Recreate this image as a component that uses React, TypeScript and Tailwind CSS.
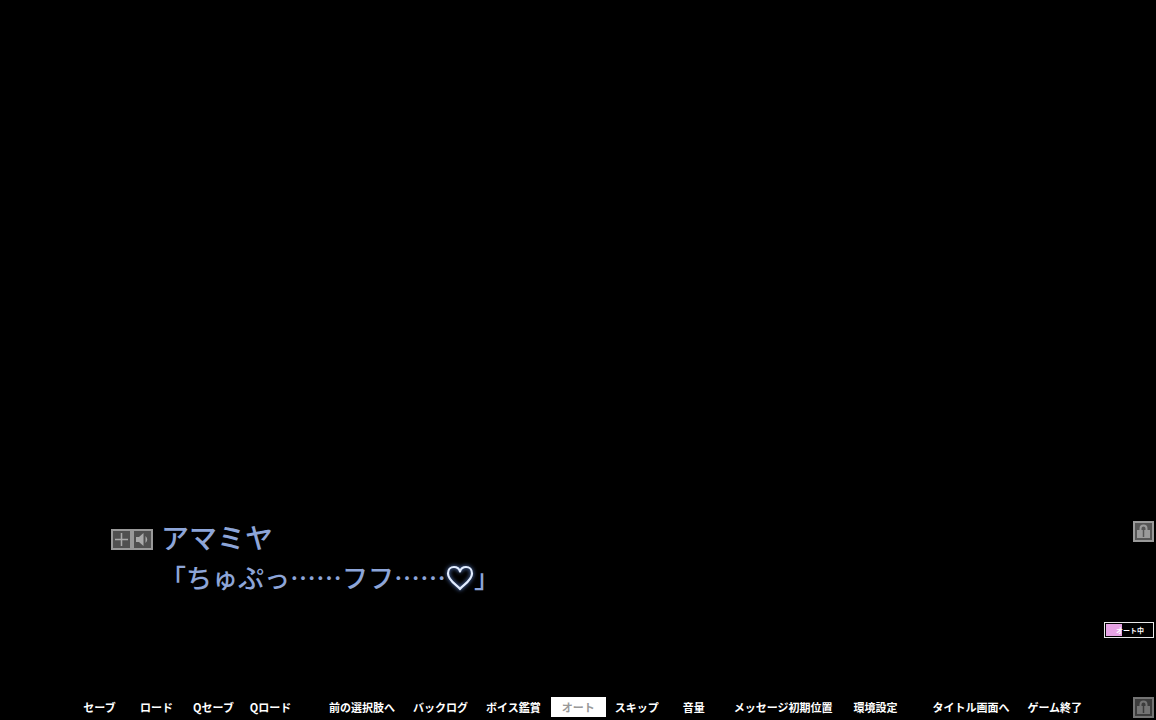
import { useState } from 'react';

const FONT = 'font-["Noto_Sans_CJK_JP",sans-serif]';

const groups = [
  { className: '', button: 'w-[57px]', items: ['セーブ', 'ロード', 'Qセーブ', 'Qロード'] },
  { className: 'ml-[21px]', button: 'px-[9px]', items: ['前の選択肢へ', 'バックログ', 'ボイス鑑賞'] },
  { className: 'ml-px', button: 'px-[11px]', items: ['オート'] },
  { className: '', button: 'px-[9px]', items: ['スキップ'] },
  { className: '', button: 'w-[52px]', items: ['音量'] },
  { className: 'ml-[5px] gap-[3px]', button: 'px-[9px]', items: ['メッセージ初期位置', '環境設定'] },
  { className: 'ml-[17px]', button: 'px-[9px]', items: ['タイトル画面へ', 'ゲーム終了'] },
];

function LockButton({ label, dim }: { label: string; dim?: boolean }) {
  return (
    <button type="button" aria-label={label} className={dim ? 'text-[#747474]' : 'text-[#9a9a9a]'}>
      <svg viewBox="0 0 21 21" className="block h-[21px] w-[21px]">
        <rect x="1" y="1" width="19" height="19" fill={dim ? '#3c3c3c' : '#565656'} stroke="currentColor" strokeWidth="2" />
        <path d="M7.5 10V7.500a3 3 0 0 1 6 0v2.500" fill="none" stroke="currentColor" strokeWidth="2" />
        <rect x="4" y="9" width="13" height="8" fill="currentColor" />
        <path d="M10.5 8v8" stroke={dim ? '#3c3c3c' : '#565656'} strokeWidth="1.5" />
      </svg>
    </button>
  );
}

export default function App() {
  const [active, setActive] = useState('オート');

  return (
    <div className={`${FONT} flex min-h-screen flex-col justify-end bg-black text-white`}>
      <main className="flex justify-between pb-[59px] pr-[2px] pl-[111px]">
        <div className="text-[#8da5d8]">
          <div className="flex h-10 items-center">
            <button type="button" aria-label="お気に入りに追加">
              <svg viewBox="0 0 21 21" className="block h-[21px] w-[21px]">
                <rect x="1" y="1" width="19" height="19" fill="#505050" stroke="#999" strokeWidth="2" />
                <path d="M10.5 4v13M4 10.5h13" stroke="#aaa" strokeWidth="1.5" />
              </svg>
            </button>
            <button type="button" aria-label="ボイス再生">
              <svg viewBox="0 0 21 21" className="block h-[21px] w-[21px]">
                <rect x="1" y="1" width="19" height="19" fill="#505050" stroke="#999" strokeWidth="2" />
                <path d="M4 8h3l4.5-4v13L7 13H4z" fill="#aaa" />
                <path d="M13.5 7q3.5 3.5 0 7z" fill="#aaa" />
              </svg>
            </button>
            <h1 className="ml-2 pb-1 text-[28px] leading-9 font-medium">アマミヤ</h1>
          </div>
          <p className="ml-[49px] flex items-center text-[26px] leading-9 font-medium">
            「ちゅぷっ……フフ……
            <svg viewBox="0 0 28 28" role="img" aria-label="ハート" className="h-7 w-7 drop-shadow-[0_0_2px_#6f9cf5]">
              <path
                d="M14 26C12 22.5 2 18 2 10.5C2 6.5 4.5 4 8 4C11 4 13.2 5.8 14 8.5C14.800 5.8 17 4 20 4C23.5 4 26 6.5 26 10.5C26 18 16 22.5 14 26Z"
                fill="none"
                stroke="#e2edff"
                strokeWidth="2.2"
                strokeLinejoin="round"
              />
            </svg>
            」
          </p>
        </div>

        <div className="flex flex-col items-end gap-20 pt-[2px]">
          <LockButton label="メッセージ枠を固定" />
          <div className="flex h-4 w-[50px] items-stretch border border-[#e8e8e8] p-px">
            <span className="w-4 bg-[#e6a3e4]" />
            <span className="-ml-1.5 text-[7px] leading-3 font-bold whitespace-nowrap">オート中</span>
          </div>
        </div>
      </main>

      <footer className="flex items-start justify-between pr-[2px] pb-[2px] pl-[71px]">
        <nav className="flex">
          {groups.map((group) => (
            <div key={group.items[0]} className={`flex ${group.className}`}>
              {group.items.map((item) => (
                <button
                  key={item}
                  type="button"
                  onClick={() => setActive(item)}
                  className={`h-5 text-center text-[11px] leading-5 font-bold whitespace-nowrap ${group.button} ${
                    item === active ? 'bg-white text-[#999]' : 'text-white'
                  }`}
                >
                  {item}
                </button>
              ))}
            </div>
          ))}
        </nav>
        <LockButton label="メニューを固定" dim />
      </footer>
    </div>
  );
}
